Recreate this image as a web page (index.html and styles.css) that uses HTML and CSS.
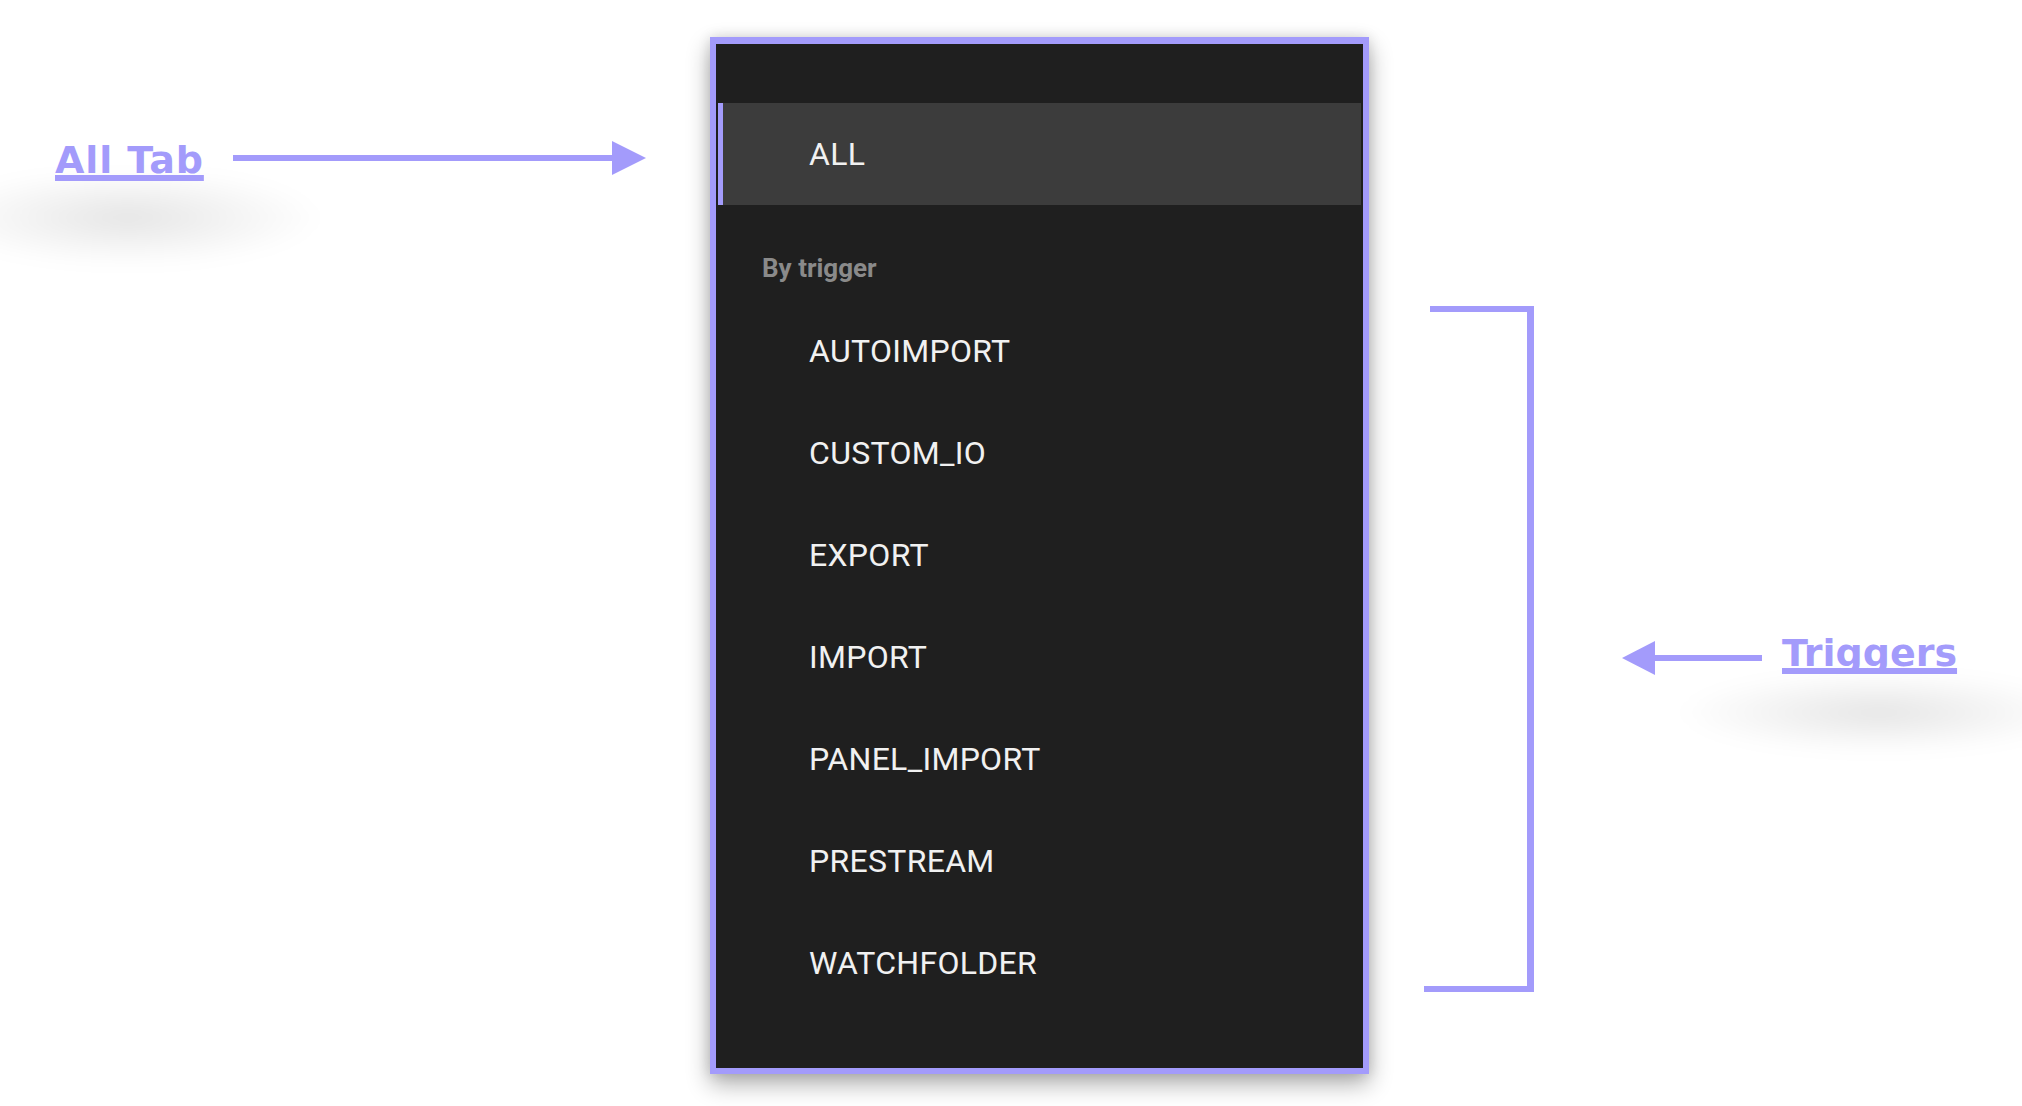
FILE: index.html
```html
<!DOCTYPE html>
<html lang="en">
<head>
<meta charset="utf-8">
<title>Tabs annotation</title>
<link rel="stylesheet" href="styles.css">
</head>
<body>
<div class="stage">
  <div class="left-area">
    <div class="callout callout-left">
      <a class="label label-all" href="#all">All Tab</a>
      <svg class="arrow arrow-right" width="413" height="34" viewBox="0 0 413 34">
        <rect x="0" y="14" width="382" height="6" fill="#a39bfb"/>
        <polygon points="379,0 413,17 379,34" fill="#a39bfb"/>
      </svg>
    </div>
  </div>

  <nav class="panel">
    <div class="tab tab-active">ALL</div>
    <div class="section">By trigger</div>
    <div class="tab">AUTOIMPORT</div>
    <div class="tab">CUSTOM_IO</div>
    <div class="tab">EXPORT</div>
    <div class="tab">IMPORT</div>
    <div class="tab">PANEL_IMPORT</div>
    <div class="tab">PRESTREAM</div>
    <div class="tab">WATCHFOLDER</div>
  </nav>

  <div class="right-area">
    <svg class="bracket" width="110" height="686" viewBox="0 0 110 686">
      <rect x="6" y="0" width="104" height="6" fill="#a39bfb"/>
      <rect x="103" y="0" width="7" height="686" fill="#a39bfb"/>
      <rect x="0" y="680" width="110" height="6" fill="#a39bfb"/>
    </svg>
    <div class="callout callout-right">
      <svg class="arrow arrow-left" width="140" height="34" viewBox="0 0 140 34">
        <polygon points="0,17 33,0 33,34" fill="#a39bfb"/>
        <rect x="30" y="14" width="110" height="6" fill="#a39bfb"/>
      </svg>
      <a class="label label-triggers" href="#triggers">Triggers</a>
    </div>
  </div>
</div>
</body>
</html>
```

FILE: styles.css
```css
html, body {
  margin: 0;
  padding: 0;
  background: #ffffff;
}

body {
  width: 2022px;
  height: 1106px;
  overflow: hidden;
  font-family: Roboto, "Liberation Sans", sans-serif;
}

.stage {
  display: flex;
  align-items: flex-start;
  width: 2022px;
  height: 1106px;
}

/* ---------- annotations ---------- */
.left-area {
  flex: none;
  width: 710px;
}

.callout {
  position: relative;
  display: flex;
  align-items: flex-start;
}

.callout-left {
  margin-top: 138px;
  padding-left: 55px;
  gap: 29px;
}

.callout-left .arrow {
  margin-top: 3px;
}

.label {
  position: relative;
  z-index: 1;
  font-family: "DejaVu Sans", "Open Sans", sans-serif;
  font-weight: 700;
  font-size: 38px;
  line-height: 44px;
  color: #a39bfb;
  text-decoration: underline;
  text-decoration-thickness: 6px;
  text-underline-offset: 2px;
  text-decoration-skip-ink: none;
  white-space: nowrap;
}

.label-all {
  letter-spacing: 0.9px;
}

.label-triggers {
  letter-spacing: 0;
}

.arrow {
  display: block;
  flex: none;
}

/* soft blurred shadows under the labels */
.callout-left::after {
  content: "";
  position: absolute;
  left: -70px;
  top: 38px;
  width: 520px;
  height: 130px;
  background: radial-gradient(ellipse 50% 50% at 38% 32%, rgba(0,0,0,0.10), rgba(0,0,0,0.04) 45%, rgba(0,0,0,0) 75%);
  filter: blur(9px);
  pointer-events: none;
}

.callout-right::after {
  content: "";
  position: absolute;
  left: -40px;
  top: 42px;
  width: 540px;
  height: 120px;
  background: radial-gradient(ellipse 50% 45% at 55% 33%, rgba(0,0,0,0.10), rgba(0,0,0,0.04) 45%, rgba(0,0,0,0) 75%);
  filter: blur(9px);
  pointer-events: none;
}

.right-area {
  flex: none;
  display: flex;
  align-items: flex-start;
  margin-top: 306px;
}

.bracket {
  display: block;
  flex: none;
  margin-left: 55px;
}

.callout-right {
  margin-top: 325px;
  margin-left: 88px;
  gap: 20px;
}

.callout-right .arrow {
  margin-top: 10px;
}

/* ---------- panel ---------- */
.panel {
  flex: none;
  box-sizing: border-box;
  width: 659px;
  height: 1037px;
  margin-top: 37px;
  border: 6px solid #a39bfb;
  border-top-width: 7px;
  background: #1f1f1f;
  padding: 59px 2px 0 2px;
  box-shadow: 0 10px 22px rgba(0, 0, 0, 0.32), 0 0 12px rgba(0, 0, 0, 0.12);
}

.tab {
  box-sizing: border-box;
  height: 102px;
  display: flex;
  align-items: center;
  padding-left: 86px;
  border-left: 5px solid transparent;
  font-size: 32px;
  font-weight: 400;
  letter-spacing: 0.3px;
  color: #f1f1f1;
}

.tab-active {
  background: #3c3c3c;
  border-left-color: #a39bfb;
}

.section {
  box-sizing: border-box;
  height: 95px;
  padding: 48px 0 0 44px;
  font-size: 26px;
  line-height: 30px;
  font-weight: 700;
  color: #8a8a8a;
}
```
